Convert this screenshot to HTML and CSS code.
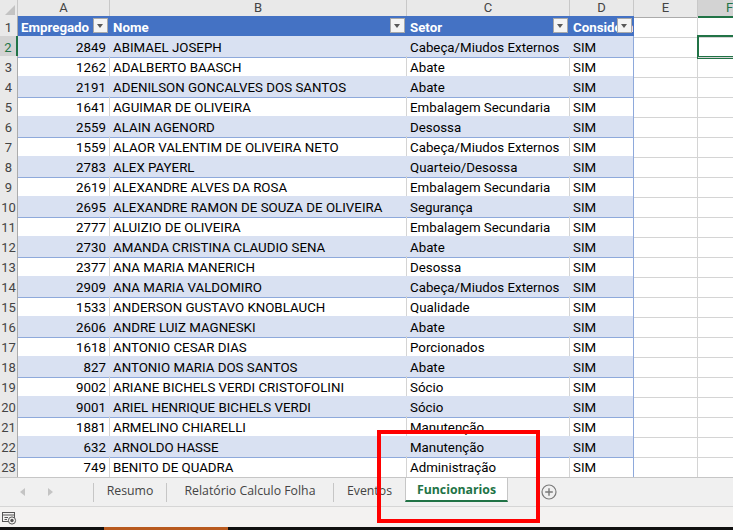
FILE: index.html
```html
<!DOCTYPE html>
<html lang="pt">
<head>
<meta charset="utf-8">
<title>Funcionarios</title>
<link rel="stylesheet" href="styles.css">
</head>
<body>
<div class="app">
  <div class="sheet">
    <div class="row colhdr">
      <div class="c corner"></div><div class="c">A</div><div class="c">B</div><div class="c">C</div><div class="c">D</div><div class="c">E</div><div class="c selcol">F</div>
    </div>
    <div class="row hdr">
      <div class="c rh">1</div>
      <div class="c t">Empregado<span class="fb"></span></div>
      <div class="c t">Nome<span class="fb"></span></div>
      <div class="c t">Setor<span class="fb"></span></div>
      <div class="c t last clip">Considerar<span class="fb"></span></div>
      <div class="c"></div><div class="c"></div>
    </div>
    <div class="row band"><div class="c rh selrow">2</div><div class="c t num">2849</div><div class="c t">ABIMAEL JOSEPH</div><div class="c t">Cabeça/Miudos Externos</div><div class="c t last">SIM</div><div class="c"></div><div class="c sel"></div></div>
    <div class="row"><div class="c rh">3</div><div class="c t num">1262</div><div class="c t">ADALBERTO BAASCH</div><div class="c t">Abate</div><div class="c t last">SIM</div><div class="c"></div><div class="c"></div></div>
    <div class="row band"><div class="c rh">4</div><div class="c t num">2191</div><div class="c t">ADENILSON GONCALVES DOS SANTOS</div><div class="c t">Abate</div><div class="c t last">SIM</div><div class="c"></div><div class="c"></div></div>
    <div class="row"><div class="c rh">5</div><div class="c t num">1641</div><div class="c t">AGUIMAR DE OLIVEIRA</div><div class="c t">Embalagem Secundaria</div><div class="c t last">SIM</div><div class="c"></div><div class="c"></div></div>
    <div class="row band"><div class="c rh">6</div><div class="c t num">2559</div><div class="c t">ALAIN AGENORD</div><div class="c t">Desossa</div><div class="c t last">SIM</div><div class="c"></div><div class="c"></div></div>
    <div class="row"><div class="c rh">7</div><div class="c t num">1559</div><div class="c t">ALAOR VALENTIM DE OLIVEIRA NETO</div><div class="c t">Cabeça/Miudos Externos</div><div class="c t last">SIM</div><div class="c"></div><div class="c"></div></div>
    <div class="row band"><div class="c rh">8</div><div class="c t num">2783</div><div class="c t">ALEX PAYERL</div><div class="c t">Quarteio/Desossa</div><div class="c t last">SIM</div><div class="c"></div><div class="c"></div></div>
    <div class="row"><div class="c rh">9</div><div class="c t num">2619</div><div class="c t">ALEXANDRE ALVES DA ROSA</div><div class="c t">Embalagem Secundaria</div><div class="c t last">SIM</div><div class="c"></div><div class="c"></div></div>
    <div class="row band"><div class="c rh">10</div><div class="c t num">2695</div><div class="c t">ALEXANDRE RAMON DE SOUZA DE OLIVEIRA</div><div class="c t">Segurança</div><div class="c t last">SIM</div><div class="c"></div><div class="c"></div></div>
    <div class="row"><div class="c rh">11</div><div class="c t num">2777</div><div class="c t">ALUIZIO DE OLIVEIRA</div><div class="c t">Embalagem Secundaria</div><div class="c t last">SIM</div><div class="c"></div><div class="c"></div></div>
    <div class="row band"><div class="c rh">12</div><div class="c t num">2730</div><div class="c t">AMANDA CRISTINA CLAUDIO SENA</div><div class="c t">Abate</div><div class="c t last">SIM</div><div class="c"></div><div class="c"></div></div>
    <div class="row"><div class="c rh">13</div><div class="c t num">2377</div><div class="c t">ANA MARIA MANERICH</div><div class="c t">Desossa</div><div class="c t last">SIM</div><div class="c"></div><div class="c"></div></div>
    <div class="row band"><div class="c rh">14</div><div class="c t num">2909</div><div class="c t">ANA MARIA VALDOMIRO</div><div class="c t">Cabeça/Miudos Externos</div><div class="c t last">SIM</div><div class="c"></div><div class="c"></div></div>
    <div class="row"><div class="c rh">15</div><div class="c t num">1533</div><div class="c t">ANDERSON GUSTAVO KNOBLAUCH</div><div class="c t">Qualidade</div><div class="c t last">SIM</div><div class="c"></div><div class="c"></div></div>
    <div class="row band"><div class="c rh">16</div><div class="c t num">2606</div><div class="c t">ANDRE LUIZ MAGNESKI</div><div class="c t">Abate</div><div class="c t last">SIM</div><div class="c"></div><div class="c"></div></div>
    <div class="row"><div class="c rh">17</div><div class="c t num">1618</div><div class="c t">ANTONIO CESAR DIAS</div><div class="c t">Porcionados</div><div class="c t last">SIM</div><div class="c"></div><div class="c"></div></div>
    <div class="row band"><div class="c rh">18</div><div class="c t num">827</div><div class="c t">ANTONIO MARIA DOS SANTOS</div><div class="c t">Abate</div><div class="c t last">SIM</div><div class="c"></div><div class="c"></div></div>
    <div class="row"><div class="c rh">19</div><div class="c t num">9002</div><div class="c t">ARIANE BICHELS VERDI CRISTOFOLINI</div><div class="c t">Sócio</div><div class="c t last">SIM</div><div class="c"></div><div class="c"></div></div>
    <div class="row band"><div class="c rh">20</div><div class="c t num">9001</div><div class="c t">ARIEL HENRIQUE BICHELS VERDI</div><div class="c t">Sócio</div><div class="c t last">SIM</div><div class="c"></div><div class="c"></div></div>
    <div class="row"><div class="c rh">21</div><div class="c t num">1881</div><div class="c t">ARMELINO CHIARELLI</div><div class="c t">Manutenção</div><div class="c t last">SIM</div><div class="c"></div><div class="c"></div></div>
    <div class="row band"><div class="c rh">22</div><div class="c t num">632</div><div class="c t">ARNOLDO HASSE</div><div class="c t">Manutenção</div><div class="c t last">SIM</div><div class="c"></div><div class="c"></div></div>
    <div class="row"><div class="c rh">23</div><div class="c t num">749</div><div class="c t">BENITO DE QUADRA</div><div class="c t">Administração</div><div class="c t last">SIM</div><div class="c"></div><div class="c"></div></div>
  </div>

  <div class="tabbar">
    <div class="nav"><span class="arrow left"></span><span class="arrow right"></span></div>
    <span class="sep"></span>
    <div class="tab w-resumo">Resumo</div>
    <span class="sep"></span>
    <div class="tab w-relatorio">Relatório Calculo Folha</div>
    <span class="sep"></span>
    <div class="tab w-eventos">Eventos</div>
    <div class="tab active">Funcionarios</div>
    <div class="add">
      <svg width="16" height="16" viewBox="0 0 16 16"><circle cx="8" cy="8" r="7" fill="none" stroke="#7a7a7a" stroke-width="1.2"/><path d="M8 4.2V11.8M4.2 8H11.8" stroke="#7a7a7a" stroke-width="1.4"/></svg>
    </div>
  </div>

  <div class="statusbar">
    <svg class="macro" width="15" height="13" viewBox="0 0 15 13">
      <rect x="0.5" y="0.5" width="12" height="9" fill="none" stroke="#555" stroke-width="1"/>
      <path d="M0.5 3H12.5" stroke="#555" stroke-width="1"/>
      <path d="M2.5 5.5H6M2.5 7.5H5" stroke="#555" stroke-width="1"/>
      <circle cx="10" cy="8.5" r="3.6" fill="#f3f2f1" stroke="#555" stroke-width="1"/>
      <circle cx="10" cy="8.5" r="1.7" fill="#555"/>
    </svg>
  </div>

  <div class="taskbar"><span class="tb-accent"></span></div>

  <div class="redbox"></div>
</div>
</body>
</html>
```

FILE: styles.css
```css
html, body {
  margin: 0;
  padding: 0;
}
body {
  width: 733px;
  height: 530px;
  overflow: hidden;
  background: #ffffff;
  font-family: Roboto, "Liberation Sans", sans-serif;
}
.app {
  position: relative;
  width: 733px;
  height: 530px;
  display: flex;
  flex-direction: column;
  overflow: hidden;
}

/* ---------- sheet grid ---------- */
.sheet {
  flex: none;
  height: 477px;
  overflow: hidden;
}
.row {
  display: grid;
  grid-template-columns: 18px 92px 297px 163px 64px 64px 64px;
  height: 20px;
}
.c {
  position: relative;
  box-sizing: border-box;
  border-right: 1px solid #d4d4d4;
  border-bottom: 1px solid #d4d4d4;
  padding: 3px 3px 0 3px;
  line-height: 18px;
  font-size: 13.3px;
  color: #000;
  white-space: nowrap;
}

/* column headers */
.colhdr {
  height: 16px;
}
.colhdr .c {
  background: #e9e9e9;
  border-right-color: #c8c8c8;
  border-bottom-color: #ababab;
  text-align: center;
  padding: 0;
  line-height: 16px;
  font-size: 13px;
  color: #444;
}
.colhdr .selcol {
  background: #d3d3d3;
  border-bottom: 2px solid #217346;
  color: #217346;
}
.corner::after {
  content: "";
  position: absolute;
  right: 2px;
  bottom: 2px;
  width: 0;
  height: 0;
  border-left: 10px solid transparent;
  border-bottom: 10px solid #c3c3c3;
}

/* row headers */
.rh {
  background: #e9e9e9;
  border-right-color: #ababab;
  border-bottom-color: #c8c8c8;
  color: #444;
  text-align: center;
  padding: 3px 0 0 0;
  font-size: 13px;
}
.rh.selrow {
  background: #d3d3d3;
  border-right: 2px solid #217346;
  color: #217346;
}

/* table */
.t {
  border-bottom-color: #8ea9db;
}
.band .t {
  background: #d9e1f2;
  border-right-color: #d9e1f2;
}
.t.last {
  border-right-color: #8ea9db;
}
.hdr .t {
  background: #4472c4;
  border-right-color: #4472c4;
  border-bottom-color: #4472c4;
  color: #fff;
  font-weight: bold;
}
.num {
  text-align: right;
}
.clip {
  overflow: hidden;
  padding-right: 17px;
}
.fb {
  position: absolute;
  right: 1px;
  top: 2px;
  width: 15px;
  height: 15px;
  box-sizing: border-box;
  background: #f4f4f4;
  border: 1px solid #a9a9a9;
}
.fb::after {
  content: "";
  position: absolute;
  left: 3px;
  top: 5px;
  width: 0;
  height: 0;
  border-left: 3.5px solid transparent;
  border-right: 3.5px solid transparent;
  border-top: 4px solid #595959;
}
.sel {
  z-index: 1;
  box-shadow: 0 0 0 1px #217346, inset 0 0 0 1px #217346;
}

/* ---------- sheet tabs ---------- */
.tabbar {
  flex: none;
  height: 29px;
  box-sizing: border-box;
  border-top: 1px solid #c6c6c6;
  background: #f0f0f0;
  display: flex;
  align-items: flex-start;
  font-family: "Open Sans", "Noto Sans", sans-serif;
  font-size: 12.3px;
  color: #444;
}
.nav {
  width: 93px;
  height: 28px;
  position: relative;
}
.arrow {
  position: absolute;
  top: 10px;
  width: 0;
  height: 0;
  border-top: 4px solid transparent;
  border-bottom: 4px solid transparent;
}
.arrow.left {
  left: 20px;
  border-right: 5px solid #c4c4c4;
}
.arrow.right {
  left: 48px;
  border-left: 5px solid #c4c4c4;
}
.sep {
  width: 1px;
  height: 19px;
  margin-top: 5px;
  background: #c6c6c6;
  flex: none;
}
.tab {
  flex: none;
  height: 24px;
  padding-top: 2px;
  line-height: 22px;
  text-align: center;
  white-space: nowrap;
  box-sizing: border-box;
}
.w-resumo { width: 72px; }
.w-relatorio { width: 166px; }
.w-eventos { width: 71px; }
.tab.active {
  width: 103px;
  background: #fff;
  border-left: 1px solid #c6c6c6;
  border-right: 1px solid #c6c6c6;
  border-bottom: 2px solid #217346;
  padding-top: 2px;
  line-height: 20px;
  color: #217346;
  font-weight: bold;
}
.add {
  margin-left: 33px;
  margin-top: 6px;
  width: 16px;
  height: 16px;
}
.add svg { display: block; }

/* ---------- status bar ---------- */
.statusbar {
  flex: none;
  height: 21px;
  box-sizing: border-box;
  border-top: 1px solid #d6d6d6;
  background: #f3f2f1;
  padding: 5px 0 0 2px;
}
.macro { display: block; }

/* ---------- bottom strip ---------- */
.taskbar {
  flex: none;
  height: 3px;
  background: #101010;
  display: flex;
}
.tb-accent {
  margin-left: 104px;
  width: 124px;
  background: #b85a1f;
}

/* ---------- annotation ---------- */
.redbox {
  position: absolute;
  left: 377px;
  top: 430px;
  width: 163px;
  height: 93px;
  box-sizing: border-box;
  border: 4px solid #ff0000;
  pointer-events: none;
}
```
